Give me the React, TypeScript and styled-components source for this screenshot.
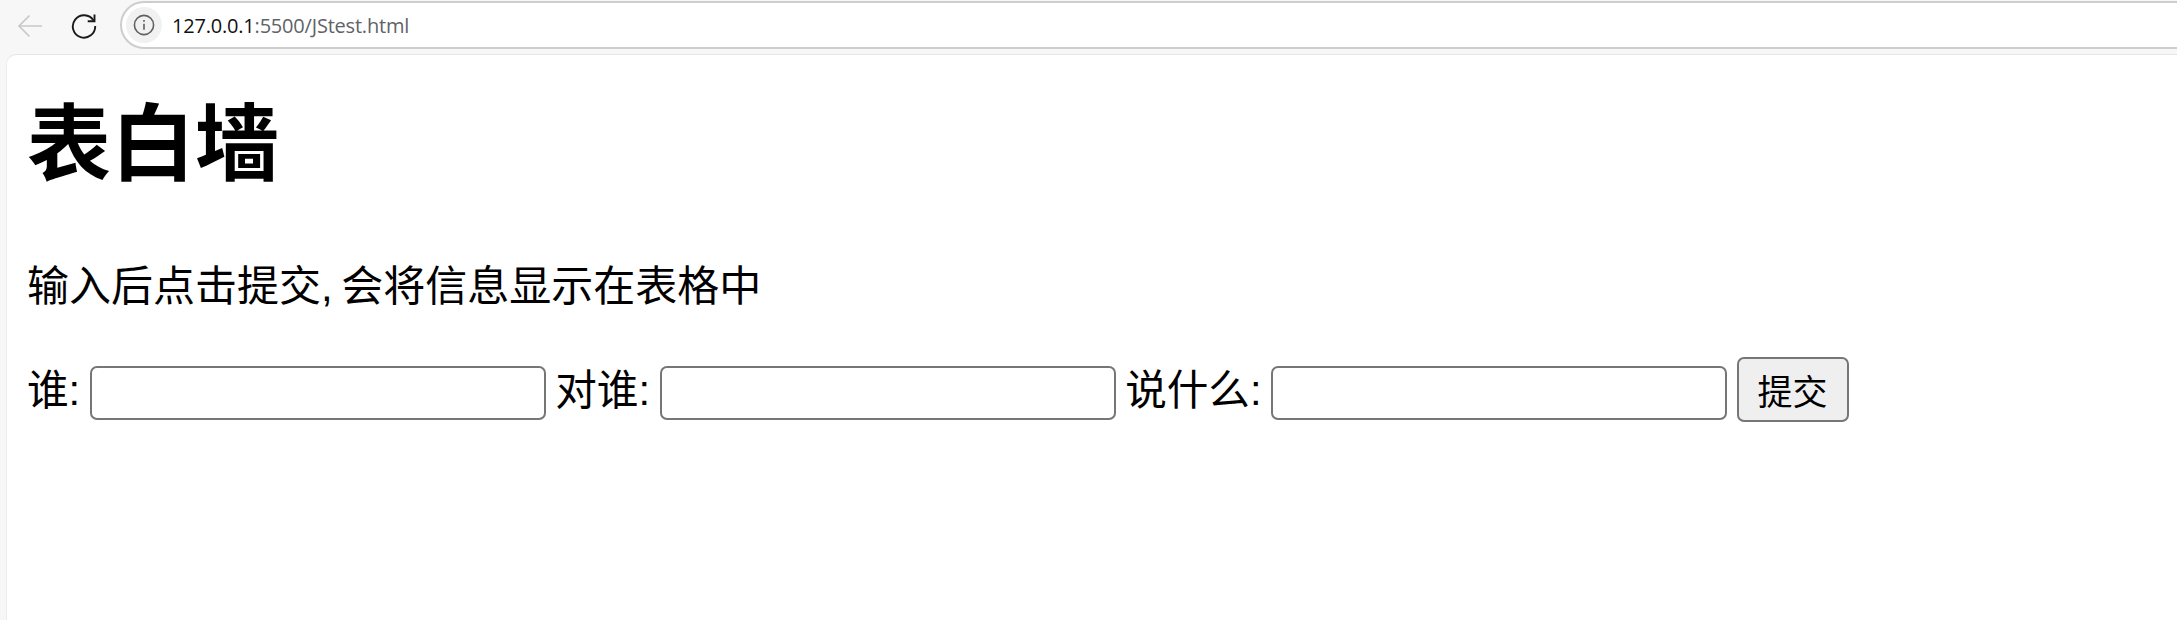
import React from "react";
import styled, { createGlobalStyle } from "styled-components";

const Global = createGlobalStyle`
  html, body { margin: 0; padding: 0; background: #f7f7f7; }
  body { width: 2177px; height: 620px; overflow: hidden; }
`;

const Shell = styled.div`
  width: 2177px;
  height: 620px;
  display: flex;
  flex-direction: column;
  overflow: hidden;
  background: #f7f7f7;
`;

const Toolbar = styled.div`
  height: 54px;
  flex: none;
  display: flex;
  align-items: flex-start;
  padding-top: 1px;
  box-sizing: border-box;
`;

const NavButton = styled.div`
  width: 24px;
  height: 24px;
  margin-top: 12px;
  margin-left: ${(p: { $left: number }) => p.$left}px;
  flex: none;
`;

const Omnibox = styled.div`
  margin-left: 25px;
  width: 2100px;
  height: 48px;
  flex: none;
  box-sizing: border-box;
  background: #fff;
  border: 2px solid #cdcdcd;
  border-radius: 24px;
  display: flex;
  align-items: center;
  padding-left: 4px;
`;

const InfoChip = styled.div`
  width: 36px;
  height: 36px;
  border-radius: 50%;
  background: #f1f1f1;
  display: flex;
  align-items: center;
  justify-content: center;
  flex: none;
`;

const Url = styled.div`
  margin-left: 10px;
  font-family: "Open Sans", "Liberation Sans", sans-serif;
  font-size: 20px;
  letter-spacing: -0.2px;
  color: #5f6368;
  white-space: nowrap;
  b { font-weight: 400; color: #111; }
`;

const Page = styled.main`
  flex: 1;
  margin-left: 6px;
  background: #fff;
  border-top: 1px solid #e6e6e6;
  border-left: 1px solid #ececec;
  border-top-left-radius: 10px;
  padding: 0 20px;
  font-family: "Liberation Sans", "Noto Sans CJK SC", sans-serif;
  font-size: 41.6px;
  color: #000;
`;

const Title = styled.h1`
  font-size: 84px;
  font-weight: 700;
  line-height: 96px;
  margin: 42px 0 63px;
`;

const Hint = styled.p`
  margin: 0 0 40px;
  font-size: 42px;
  line-height: 61px;
  white-space: nowrap;
  word-spacing: -3px;
`;

const Form = styled.div`
  white-space: nowrap;
  line-height: 61px;
  word-spacing: -2px;
`;

const Field = styled.input`
  width: 456px;
  height: 54px;
  box-sizing: border-box;
  border: 2px solid #767676;
  border-radius: 7px;
  background: #fff;
  padding: 0 5px;
  font-size: 35px;
  font-family: inherit;
  vertical-align: baseline;
`;

const Submit = styled.button`
  width: 112px;
  height: 65px;
  box-sizing: border-box;
  border: 2px solid #767676;
  border-radius: 7px;
  background: #efefef;
  padding: 0;
  font-size: 35px;
  font-family: "Liberation Sans", "Noto Sans CJK SC", sans-serif;
  color: #000;
`;

export default function App() {
  return (
    <>
      <Global />
      <Shell>
        <Toolbar>
          <NavButton $left={17}>
            <svg width="26" height="26" viewBox="0 0 26 26" fill="none" stroke="#c9c9c9" strokeWidth="1.7">
              <path d="M25 13H2M12.5 2.5 2 13l10.5 10.5" />
            </svg>
          </NavButton>
          <NavButton $left={30}>
            <svg width="26" height="26" viewBox="0 0 26 26" fill="none" stroke="#1a1a1a" strokeWidth="1.9">
              <path d="M22.5 7.5A11.2 11.2 0 1 0 24.2 13" />
              <path d="M23.5 1.5v6.8h-6.8" />
            </svg>
          </NavButton>
          <Omnibox>
            <InfoChip>
              <svg width="22" height="22" viewBox="0 0 22 22" fill="none" stroke="#606060" strokeWidth="1.6">
                <circle cx="11" cy="11" r="9.6" />
                <path d="M11 9.8v6" />
                <path d="M11 6v1.8" />
              </svg>
            </InfoChip>
            <Url>
              <b>127.0.0.1</b>:5500/JStest.html
            </Url>
          </Omnibox>
        </Toolbar>
        <Page>
          <Title>表白墙</Title>
          <Hint>输入后点击提交, 会将信息显示在表格中</Hint>
          <Form>
            谁: <Field /> 对谁: <Field /> 说什么: <Field /> <Submit>提交</Submit>
          </Form>
        </Page>
      </Shell>
    </>
  );
}
